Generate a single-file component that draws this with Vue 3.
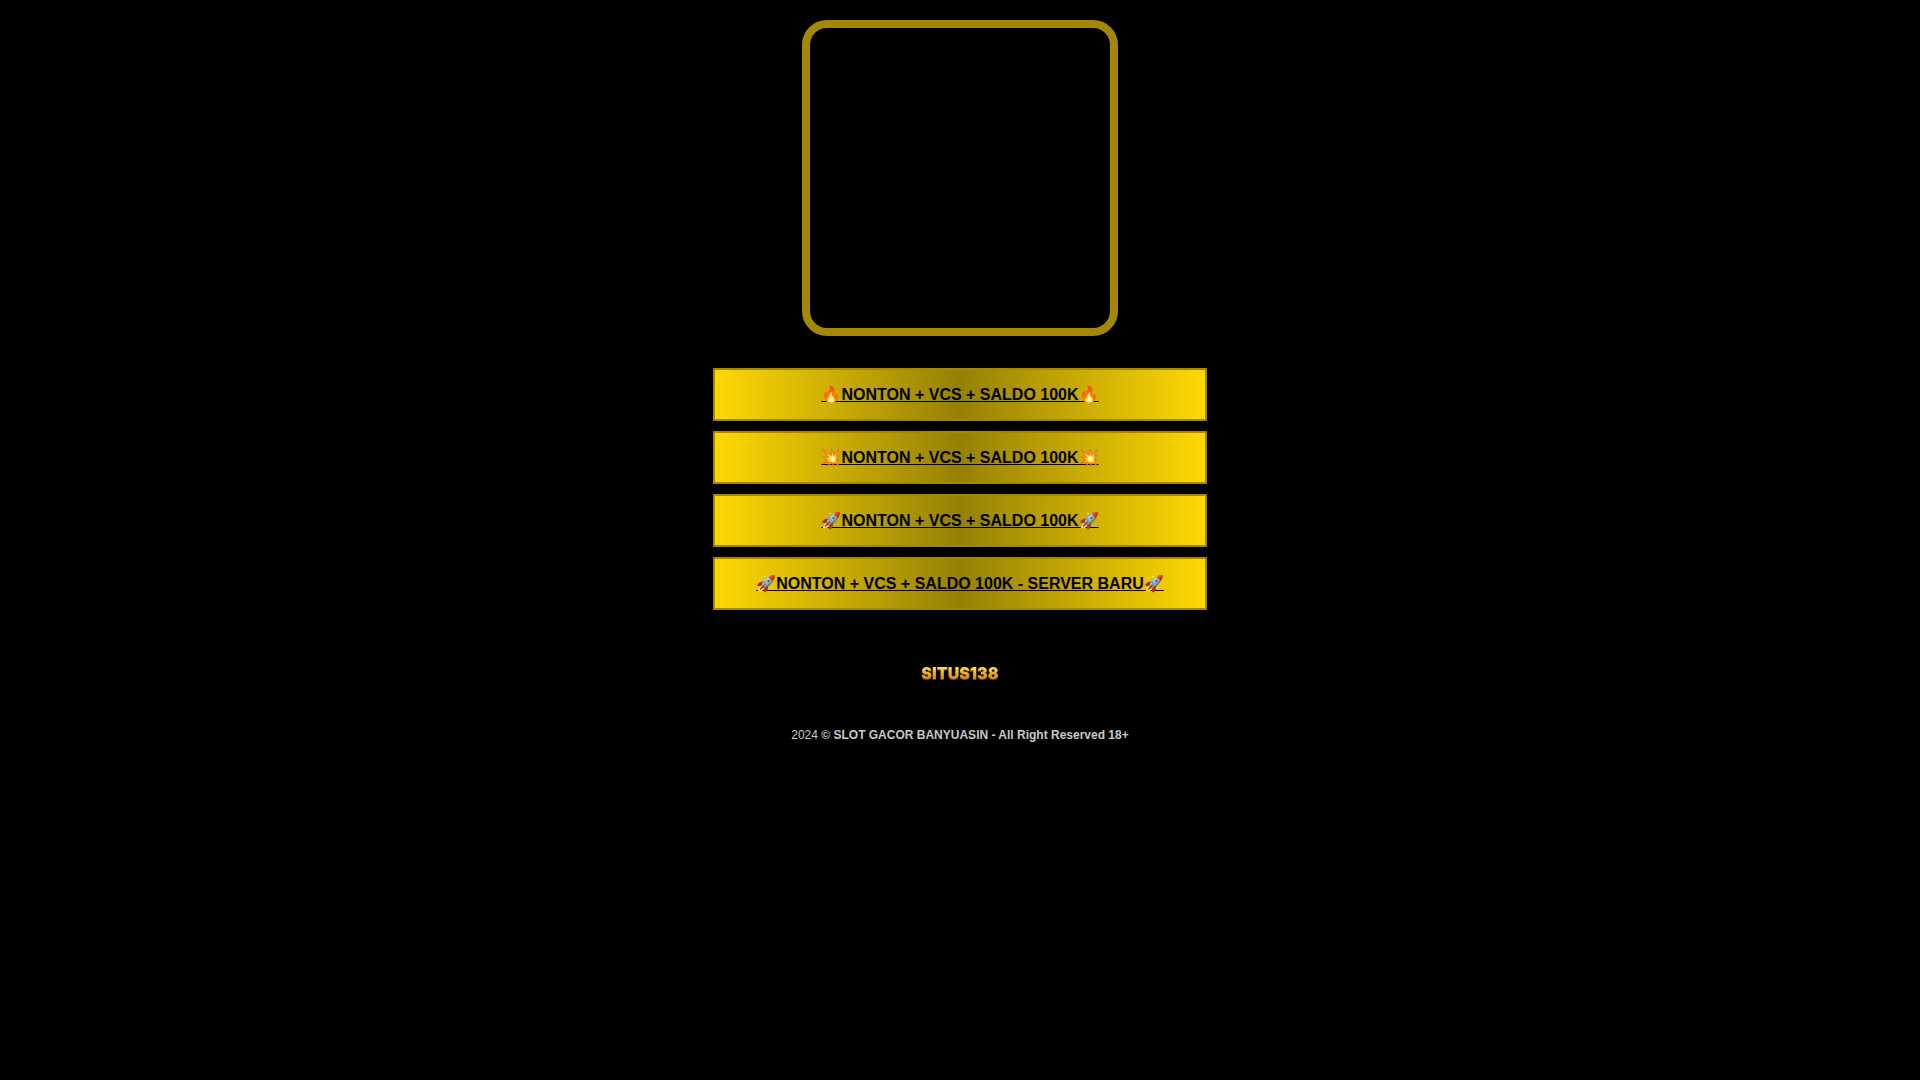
<script setup>
const links = [
  { icon: '🔥', label: 'NONTON + VCS + SALDO 100K' },
  { icon: '💥', label: 'NONTON + VCS + SALDO 100K' },
  { icon: '🚀', label: 'NONTON + VCS + SALDO 100K' },
  { icon: '🚀', label: 'NONTON + VCS + SALDO 100K - SERVER BARU' },
]
</script>

<template>
  <main class="page">
    <div class="frame"></div>
    <nav class="links">
      <a v-for="(link, i) in links" :key="i" class="link" href="#">{{ link.icon }}{{ link.label }}{{ link.icon }}</a>
    </nav>
    <a class="logo" href="#">SITUS138</a>
    <footer class="footer">2024 <b>© SLOT GACOR BANYUASIN - All Right Reserved 18+</b></footer>
  </main>
</template>

<style>
body {
  margin: 0;
  background: #000;
}
</style>

<style scoped>
.page {
  display: flex;
  flex-direction: column;
  align-items: center;
  padding: 20px 16px;
  font-family: "Liberation Sans", Arial, sans-serif;
}
.frame {
  box-sizing: border-box;
  width: 100%;
  max-width: 316px;
  aspect-ratio: 1;
  border: 8px solid #a38805;
  border-radius: 25px;
}
.links {
  display: flex;
  flex-direction: column;
  gap: 10px;
  width: 100%;
  max-width: 494px;
  margin-top: 32px;
}
.link {
  padding: 15px;
  border: 2px solid #a38805;
  border-radius: 1px;
  background: linear-gradient(to right, #ffd802, #958006, #ffd802);
  color: #000;
  font-size: 16px;
  font-weight: 700;
  line-height: 19px;
  text-align: center;
  text-decoration: underline;
}
.logo {
  margin-top: 53px;
  background: linear-gradient(#f8dc50 25%, #e8b02a 50%, #d98a12 80%);
  background-clip: text;
  color: transparent;
  filter: drop-shadow(0 1px 0 #7a4406);
  font-family: Inter, sans-serif;
  font-size: 16px;
  font-weight: 900;
  line-height: 20px;
  text-decoration: none;
}
.footer {
  margin-top: 44px;
  color: #c8c8c8;
  font-size: 12px;
  line-height: 16px;
  text-align: center;
}
</style>
